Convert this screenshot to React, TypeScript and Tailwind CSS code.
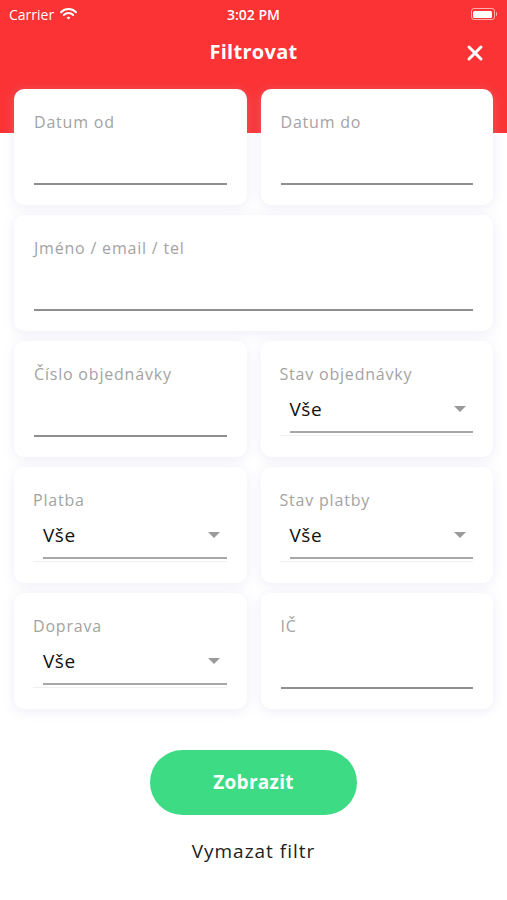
import { X } from "lucide-react";

const font = { fontFamily: '"Open Sans", "DejaVu Sans", sans-serif' };

const TextCard = ({ label, wide = false }: { label: string; wide?: boolean }) => (
  <div
    className={`h-[116px] rounded-[10px] bg-white shadow-[0_2px_12px_rgba(190,190,225,0.28)] px-[20px] pt-[22px] flex flex-col ${
      wide ? "col-span-2" : ""
    }`}
  >
    <span className="text-[16px] leading-[22px] text-[#a3a3a3] tracking-[0.8px]">{label}</span>
    <div className="flex-1" />
    <div className="h-[2px] bg-[#8e8e8e] mb-[20px]" />
  </div>
);

const SelectCard = ({ label }: { label: string }) => (
  <div className="h-[116px] rounded-[10px] bg-white shadow-[0_2px_12px_rgba(190,190,225,0.28)] pl-[19px] pr-[20px] pt-[22px] flex flex-col">
    <span className="text-[16px] leading-[22px] text-[#a3a3a3] tracking-[0.8px]">{label}</span>
    <div className="mt-[10px] pl-[10px] flex items-center justify-between h-[28px]">
      <span className="text-[19px] text-[#111] tracking-[0.5px]">Vše</span>
      <svg width="12" height="7" viewBox="0 0 12 7" className="mr-[7px]">
        <path d="M0 0h12L6 6z" fill="#9a9a9a" />
      </svg>
    </div>
    <div className="mt-[8px] ml-[10px] h-[2px] bg-[#a8a8a8]" />
    <div className="mt-[2px] h-px bg-[#f0f0f0]" />
  </div>
);

export default function App() {
  return (
    <div className="min-h-[900px] bg-white" style={font}>
      <div className="h-[133px] bg-[#fb3335] text-white">
        <div className="h-[28px] flex items-center justify-between px-[9px] relative">
          <div className="flex items-center gap-[6px] text-[14px]">
            <span>Carrier</span>
            <svg width="17" height="12" viewBox="0 0 17 12">
              <path d="M1 4.2a10.5 10.5 0 0 1 15 0" stroke="white" strokeWidth="2" fill="none" strokeLinecap="round" />
              <path d="M3.8 7a6.5 6.5 0 0 1 9.4 0" stroke="white" strokeWidth="2" fill="none" strokeLinecap="round" />
              <path d="M6.5 9.6 8.5 11.6 10.5 9.6a3 3 0 0 0-4 0z" fill="white" />
            </svg>
          </div>
          <span className="absolute left-1/2 -translate-x-1/2 text-[14px] font-semibold">3:02 PM</span>
          <div className="flex items-center mr-[1px]">
            <div className="w-[24px] h-[12px] rounded-[3px] border border-white/60 p-[1.5px]">
              <div className="w-full h-full rounded-[1.5px] bg-white" />
            </div>
            <div className="w-[1.5px] h-[4px] bg-white/60 rounded-r ml-[1px]" />
          </div>
        </div>
        <div className="h-[48px] flex items-center justify-center relative">
          <span className="text-[20px] font-bold tracking-[0.3px]">Filtrovat</span>
          <X className="absolute right-[20px] top-[13px]" size={24} strokeWidth={3} />
        </div>
      </div>

      <div className="-mt-[44px] grid grid-cols-2 gap-x-[14px] gap-y-[10px] px-[14px]">
        <TextCard label="Datum od" />
        <TextCard label="Datum do" />
        <TextCard label="Jméno / email / tel" wide />
        <TextCard label="Číslo objednávky" />
        <SelectCard label="Stav objednávky" />
        <SelectCard label="Platba" />
        <SelectCard label="Stav platby" />
        <SelectCard label="Doprava" />
        <TextCard label="IČ" />
      </div>

      <div className="flex flex-col items-center mt-[41px]">
        <button className="w-[207px] h-[65px] rounded-full bg-[#3ddc84] text-white text-[19px] font-bold tracking-[0.3px]">
          Zobrazit
        </button>
        <span className="mt-[22px] text-[19px] text-[#222] tracking-[1px]">Vymazat filtr</span>
      </div>
    </div>
  );
}
